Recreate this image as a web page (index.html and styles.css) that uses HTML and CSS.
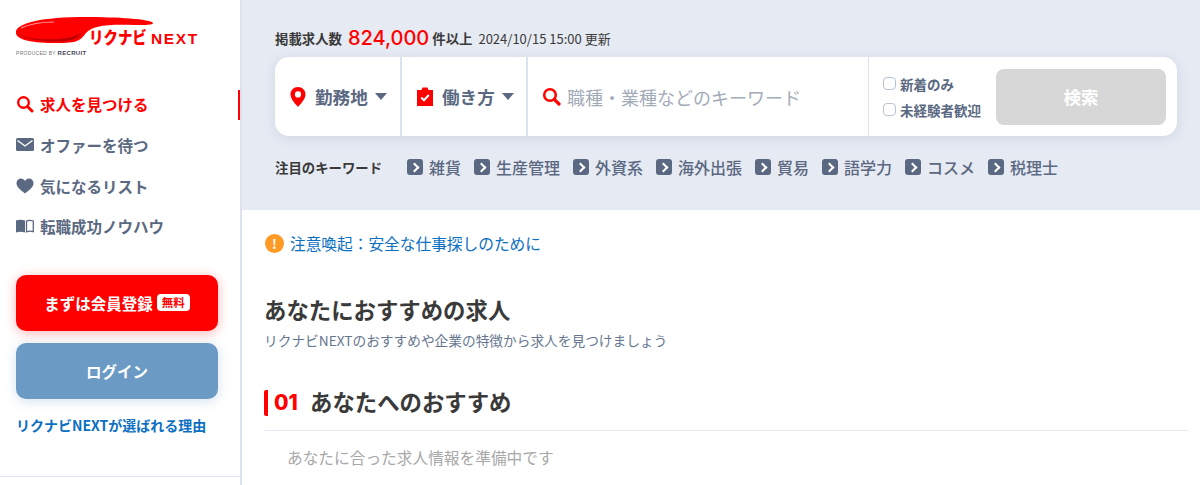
FILE: index.html
```html
<!DOCTYPE html>
<html lang="ja">

<head>
    <meta charset="UTF-8">
    <title>リクナビNEXT</title>

    <link rel="stylesheet" href="styles.css">
</head>

<body>
<div class="page">
    <aside class="sidebar">
        <div class="sidebar-inner">
            <a class="logo">
                <svg class="logo-swoosh" width="140" height="28" viewBox="0 0 140 28">
                    <path d="M0 14 C3 6 25 0 70 0 C100 0 135 2 137 6 C137 8 130 8 118 8 C90 7 76 9 70 16 C65 22 64 26 44 26 C20 26 -2 24 0 14 Z" fill="#ff0000"/>
                    <path d="M5 11 C14 7 26 5 38 5" stroke="#ff9a9a" stroke-width="1.2" fill="none"/>
                    <path d="M2 17 C12 24 35 25 48 24 C60 23 62 20 66 16 C60 19 54 21 44 22 C28 23 12 22 2 17 Z" fill="#b80000"/>
                </svg>
                <span class="logo-name">リクナビ</span>
                <span class="logo-next">NEXT</span>
                <span class="logo-by">PRODUCED BY <b>RECRUIT</b></span>
            </a>

            <nav class="side-nav">
                <a class="nav-item active">
                    <svg class="nav-icon" width="18" height="18" viewBox="0 0 18 18"><circle cx="7.5" cy="7.5" r="5.3" fill="none" stroke="#ff0000" stroke-width="2.4"/><path d="M11.5 11.5 L16 16" stroke="#ff0000" stroke-width="3" stroke-linecap="round"/></svg>
                    求人を見つける
                </a>
                <a class="nav-item">
                    <svg class="nav-icon" width="18" height="14" viewBox="0 0 18 14"><rect width="18" height="13" rx="1.5" fill="#5a6881"/><path d="M1.5 2.5 L9 8 L16.5 2.5" fill="none" stroke="#fff" stroke-width="1.4"/></svg>
                    オファーを待つ
                </a>
                <a class="nav-item">
                    <svg class="nav-icon" width="18" height="16" viewBox="0 0 18 16"><path d="M9 15.5 C4 11.5 .5 9 .5 5 C.5 2.3 2.6 .5 5 .5 C6.7 .5 8.2 1.4 9 3 C9.8 1.4 11.3 .5 13 .5 C15.4 .5 17.5 2.3 17.5 5 C17.5 9 14 11.5 9 15.5 Z" fill="#5a6881"/></svg>
                    気になるリスト
                </a>
                <a class="nav-item">
                    <svg class="nav-icon" width="18" height="14" viewBox="0 0 18 14"><path d="M0 1.5 C3 .5 6 .5 9 1.5 V13.5 C6 12.5 3 12.5 0 13.5 Z" fill="#5a6881"/><path d="M10.5 2 C12.5 1.2 14.5 1.2 17.3 2 V12.6 C14.5 11.9 12.5 11.9 10.5 12.8 Z" fill="none" stroke="#5a6881" stroke-width="1.3"/></svg>
                    転職成功ノウハウ
                </a>
            </nav>

            <a class="btn btn-register">まずは会員登録<span class="free-tag">無料</span></a>
            <a class="btn btn-login">ログイン</a>
            <a class="why-link">リクナビNEXTが選ばれる理由</a>
        </div>
    </aside>

    <main class="main">
        <section class="hero">
            <p class="count-line">
                掲載求人数<span class="count-num">824,000</span><span class="count-unit">件以上</span><span class="count-date">2024/10/15 15:00 更新</span>
            </p>

            <div class="search-box">
                <div class="search-cell cell-place">
                    <svg width="16" height="20" viewBox="0 0 16 20"><path fill-rule="evenodd" d="M8 0 C3.6 0 .5 3.3 .5 7.3 C.5 12 5 16.5 8 20 C11 16.5 15.5 12 15.5 7.3 C15.5 3.3 12.4 0 8 0 Z M8 4.3 A3.1 3.1 0 1 1 8 10.5 A3.1 3.1 0 1 1 8 4.3 Z" fill="#ff0000"/></svg>
                    <span class="cell-label">勤務地</span><span class="caret"></span>
                </div>
                <div class="search-cell cell-style">
                    <svg width="16" height="19" viewBox="0 0 16 19"><path d="M0 3 H4.5 L5.5 .5 H10.5 L11.5 3 H16 V19 H0 Z" fill="#ff0000"/><path d="M4.2 10.5 L7 13.2 L11.8 8" fill="none" stroke="#fff" stroke-width="2"/></svg>
                    <span class="cell-label">働き方</span><span class="caret"></span>
                </div>
                <div class="search-cell cell-keyword">
                    <svg width="19" height="19" viewBox="0 0 19 19"><circle cx="8" cy="8" r="5.8" fill="none" stroke="#ff0000" stroke-width="2.5"/><path d="M12.3 12.3 L17 17" stroke="#ff0000" stroke-width="3.2" stroke-linecap="round"/></svg>
                    <span class="keyword-placeholder">職種・業種などのキーワード</span>
                </div>
                <div class="search-cell cell-options">
                    <div class="checks">
                        <label class="check"><span class="check-box"></span>新着のみ</label>
                        <label class="check"><span class="check-box"></span>未経験者歓迎</label>
                    </div>
                    <button class="search-btn">検索</button>
                </div>
            </div>

            <div class="keywords">
                <span class="keywords-title">注目のキーワード</span>
                <a class="kw"><span class="kw-arrow"></span>雑貨</a>
                <a class="kw"><span class="kw-arrow"></span>生産管理</a>
                <a class="kw"><span class="kw-arrow"></span>外資系</a>
                <a class="kw"><span class="kw-arrow"></span>海外出張</a>
                <a class="kw"><span class="kw-arrow"></span>貿易</a>
                <a class="kw"><span class="kw-arrow"></span>語学力</a>
                <a class="kw"><span class="kw-arrow"></span>コスメ</a>
                <a class="kw"><span class="kw-arrow"></span>税理士</a>
            </div>
        </section>

        <section class="content">
            <a class="notice"><span class="notice-icon">!</span>注意喚起&#xFF1A;安全な仕事探しのために</a>

            <h2 class="rec-title">あなたにおすすめの求人</h2>
            <p class="rec-sub">リクナビNEXTのおすすめや企業の特徴から求人を見つけましょう</p>

            <h3 class="rec-head"><span class="rec-num">01</span>あなたへのおすすめ</h3>
            <p class="rec-empty">あなたに合った求人情報を準備中です</p>
        </section>
    </main>
</div>
</body>

</html>
```

FILE: styles.css
```css
* {
    box-sizing: border-box;
}

body {
    margin: 0;
    height: 485px;
    overflow: hidden;
    background-color: #fff;
    font-family: "Noto Sans CJK JP", "Inter", sans-serif;
    color: #3a3a3a;
}

p,
h2,
h3 {
    margin: 0;
}

.page {
    display: flex;
    height: 485px;
}

/* sidebar */
.sidebar {
    width: 242px;
    flex-shrink: 0;
    border-right: 2px solid #dde3ee;
}

.sidebar-inner {
    height: 477px;
    padding: 17px 0 0 16px;
    border-bottom: 1px solid #dde3ee;
}

.logo {
    position: relative;
    display: block;
    height: 39px;
}

.logo-swoosh {
    display: block;
}

.logo-name {
    position: absolute;
    left: 73px;
    top: 10px;
    font-size: 17px;
    line-height: 20px;
    font-weight: 900;
    color: #ff0000;
    white-space: nowrap;
    transform: scaleX(.85);
    transform-origin: left center;
}

.logo-next {
    position: absolute;
    left: 135px;
    top: 15px;
    font-family: "Liberation Sans", sans-serif;
    font-size: 15.5px;
    line-height: 14px;
    font-weight: 700;
    letter-spacing: 1.6px;
    color: #ff0000;
}

.logo-by {
    position: absolute;
    left: 0;
    top: 33px;
    font-family: "Liberation Sans", sans-serif;
    font-size: 5px;
    line-height: 6px;
    letter-spacing: .3px;
    color: #777;
    white-space: nowrap;
}

.logo-by b {
    color: #445;
    font-size: 6px;
}

.side-nav {
    margin-top: 28px;
}

.nav-item {
    position: relative;
    display: flex;
    align-items: center;
    height: 40.7px;
    font-size: 15.5px;
    font-weight: 700;
    color: #5a6881;
    white-space: nowrap;
}

.nav-icon {
    width: 18px;
    margin-right: 6px;
}

.nav-item.active {
    color: #ff0000;
}

.nav-item.active::after {
    content: "";
    position: absolute;
    right: 0;
    top: 6px;
    width: 2px;
    height: 30px;
    background-color: #ff0000;
}

.btn {
    display: flex;
    align-items: center;
    justify-content: center;
    width: 202px;
    height: 56px;
    border-radius: 10px;
    color: #fff;
    font-size: 15.5px;
    font-weight: 700;
}

.btn-register {
    margin-top: 28px;
    background-color: #ff0000;
    box-shadow: 0 2px 12px rgba(255, 0, 0, .3);
}

.btn-login {
    margin-top: 12px;
    background-color: #6b9ac4;
    box-shadow: 0 2px 12px rgba(107, 154, 196, .3);
}

.free-tag {
    margin-left: 4px;
    padding: 0 5px;
    border-radius: 4px;
    background-color: #fff;
    color: #ff0000;
    font-size: 11.5px;
    line-height: 17px;
}

.why-link {
    display: block;
    margin-top: 17px;
    font-size: 14px;
    line-height: 19px;
    font-weight: 700;
    color: #0b6fc2;
    white-space: nowrap;
}

/* hero search */
.main {
    flex: 1;
    min-width: 0;
}

.hero {
    height: 210px;
    padding: 27px 23px 0 33px;
    background-color: #e6eaf3;
}

.count-line {
    display: flex;
    align-items: center;
    height: 22px;
    font-size: 13.4px;
    font-weight: 700;
    white-space: nowrap;
}

.count-num {
    margin: 0 3px 0 6px;
    font-family: "Inter", sans-serif;
    font-size: 20px;
    font-weight: 500;
    color: #ff0000;
}

.count-date {
    margin-left: 6px;
    font-size: 13px;
    font-weight: 400;
}

.search-box {
    display: flex;
    height: 79px;
    margin-top: 8px;
    border-radius: 14px;
    background-color: #fff;
    box-shadow: 0 2px 12px rgba(90, 104, 129, .15);
}

.search-cell {
    display: flex;
    align-items: center;
    border-right: 2px solid #dde3ee;
}

.cell-place {
    width: 127px;
    padding-left: 15px;
}

.cell-style {
    width: 126px;
    padding-left: 15px;
}

.cell-keyword {
    width: 341px;
    padding-left: 14px;
    border-right-width: 1px;
}

.cell-options {
    flex: 1;
    padding: 0 11px 0 14px;
    border-right: none;
}

.cell-label {
    margin-left: 9px;
    font-size: 17.6px;
    font-weight: 700;
    color: #5a6881;
}

.caret {
    width: 0;
    height: 0;
    margin-left: 7px;
    border-left: 6px solid transparent;
    border-right: 6px solid transparent;
    border-top: 7px solid #5a6881;
}

.keyword-placeholder {
    margin-left: 6px;
    font-size: 18px;
    color: #a3abb8;
    white-space: nowrap;
}

.checks {
    display: flex;
    flex-direction: column;
    gap: 8px;
}

.check {
    display: flex;
    align-items: center;
    font-size: 13.5px;
    line-height: 18px;
    font-weight: 700;
    color: #5a6881;
    white-space: nowrap;
}

.check-box {
    width: 13px;
    height: 13px;
    margin-right: 4px;
    border: 1px solid #b9c2d2;
    border-radius: 4px;
}

.search-btn {
    width: 170px;
    height: 56px;
    margin-left: auto;
    border: none;
    border-radius: 8px;
    background-color: #d7d7d7;
    color: #fff;
    font-family: inherit;
    font-size: 17.5px;
    font-weight: 700;
}

.keywords {
    display: flex;
    align-items: center;
    height: 24px;
    margin-top: 19px;
    font-size: 16px;
    font-weight: 500;
    color: #5a6881;
    white-space: nowrap;
}

.keywords-title {
    width: 132px;
    font-size: 13.4px;
    font-weight: 700;
    color: #3a3a3a;
}

.kw {
    display: flex;
    align-items: center;
    margin-right: 13px;
}

.kw-arrow {
    position: relative;
    width: 16px;
    height: 16px;
    margin-right: 6px;
    border-radius: 3px;
    background-color: #5a6881;
}

.kw-arrow::after {
    content: "";
    position: absolute;
    left: 4px;
    top: 5px;
    width: 5px;
    height: 5px;
    border-top: 2px solid #fff;
    border-right: 2px solid #fff;
    transform: rotate(45deg);
}

/* recommendations */
.content {
    padding: 21px 12px 0 22px;
}

.notice {
    display: flex;
    align-items: center;
    height: 24px;
    font-size: 15.7px;
    color: #0b6fc2;
    white-space: nowrap;
}

.notice-icon {
    width: 19px;
    height: 19px;
    margin: 0 6px 0 1px;
    border-radius: 50%;
    background-color: #ff9a24;
    color: #fff;
    font-size: 13px;
    line-height: 19px;
    font-weight: 700;
    text-align: center;
}

.rec-title {
    margin-top: 38px;
    font-size: 22.4px;
    line-height: 32px;
    font-weight: 700;
}

.rec-sub {
    margin-top: 5px;
    font-size: 13.7px;
    line-height: 20px;
    color: #67768f;
    white-space: nowrap;
}

.rec-head {
    display: flex;
    align-items: center;
    height: 41px;
    margin-top: 32px;
    padding-bottom: 4px;
    font-size: 22.4px;
    font-weight: 700;
}

.rec-num {
    width: 46px;
    margin-top: 4px;
    padding-left: 6px;
    font-family: "Inter", sans-serif;
    font-size: 21px;
    font-weight: 800;
    color: #ff0000;
    border-left: 4px solid #ff0000;
    border-radius: 2px;
    line-height: 26px;
}

.rec-empty {
    margin-top: 7px;
    padding: 12px 0 0 23px;
    border-top: 1px solid #e6eaf3;
    font-size: 15.7px;
    line-height: 30px;
    color: #a8a8a8;
    white-space: nowrap;
}
```
